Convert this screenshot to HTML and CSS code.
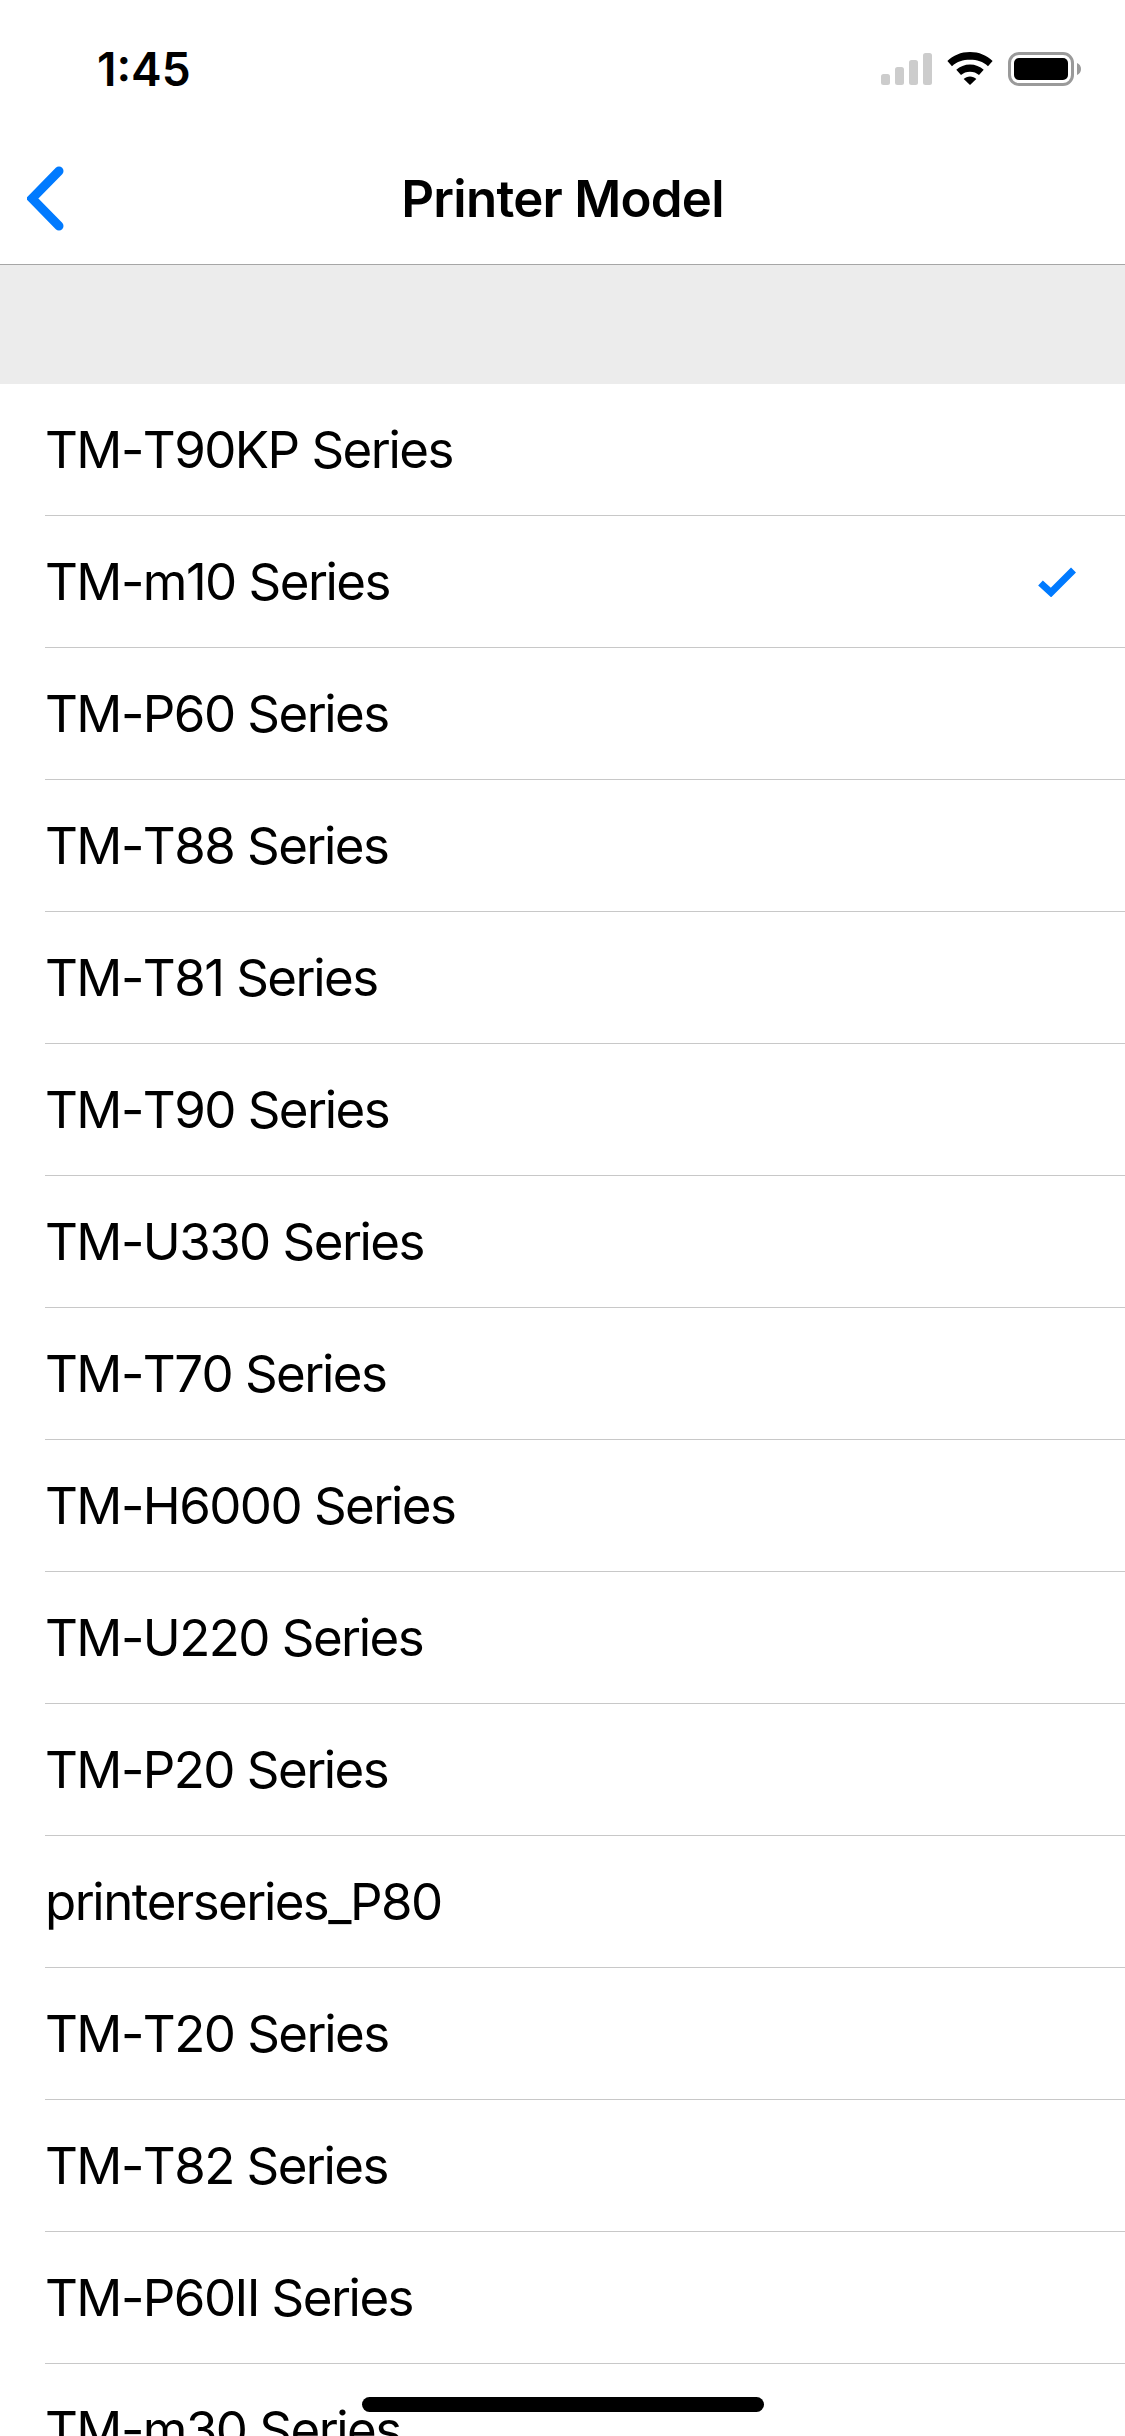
FILE: index.html
```html
<!DOCTYPE html>
<html>
  <head>
    <meta charset="UTF-8">
    <meta name="viewport" content="width=device-width, initial-scale=1">
    <title>Printer Model</title>
    <link rel="stylesheet" href="styles.css">
  </head>
  <body>
    <div class="screen">
      <div class="status-bar">
        <span class="status-time">1:45</span>
        <div class="status-icons">
          <svg class="icon-signal" width="51" height="32" viewBox="0 0 51 32">
            <rect x="0" y="21" width="9" height="11" rx="2.5"/>
            <rect x="14" y="14" width="9" height="18" rx="2.5"/>
            <rect x="28" y="7" width="9" height="25" rx="2.5"/>
            <rect x="42" y="0" width="9" height="32" rx="2.5"/>
          </svg>
          <svg class="icon-wifi" width="46" height="33" viewBox="0 0 46 33">
            <path d="M23 0C14 0 6 3.400.4 9L5 14.200C10 9.600 16.100 7.800 23 7.800s13 1.800 18 6.400L45.600 9C40 3.400 32 0 23 0z"/>
            <path d="M23 12.500c-5.200 0-10 2-13.700 5.300l4.700 5.200c2.400-2.100 5.500-3.300 9-3.300s6.600 1.200 9 3.300l4.700-5.200c-3.700-3.300-8.500-5.300-13.700-5.300z"/>
            <path d="M23 24.500c-2.500 0-4.700.9-6.300 2.400L23 33l6.300-6.100c-1.600-1.500-3.800-2.400-6.300-2.400z"/>
          </svg>
          <svg class="icon-battery" width="73" height="34" viewBox="0 0 73 34">
            <rect class="battery-case" x="1.500" y="1.500" width="63" height="31" rx="9.500"/>
            <rect x="6" y="6" width="54" height="22" rx="5"/>
            <path class="battery-nub" d="M69 11c2.500.8 4 3.300 4 6s-1.500 5.200-4 6z"/>
          </svg>
        </div>
      </div>

      <div class="nav-bar">
        <svg class="nav-back" width="38" height="65" viewBox="0 0 38 65">
          <path d="M32 5 5 32.500 32 60"/>
        </svg>
        <span class="nav-title">Printer Model</span>
      </div>

      <div class="section-header"></div>

      <ul class="model-list">
        <li class="model-row"><span>TM-T90KP Series</span></li>
        <li class="model-row">
          <span>TM-m10 Series</span>
          <svg class="row-check" width="38" height="30" viewBox="0 0 38 30">
            <path d="M2.500 16 13 25.500 35.500 3"/>
          </svg>
        </li>
        <li class="model-row"><span>TM-P60 Series</span></li>
        <li class="model-row"><span>TM-T88 Series</span></li>
        <li class="model-row"><span>TM-T81 Series</span></li>
        <li class="model-row"><span>TM-T90 Series</span></li>
        <li class="model-row"><span>TM-U330 Series</span></li>
        <li class="model-row"><span>TM-T70 Series</span></li>
        <li class="model-row"><span>TM-H6000 Series</span></li>
        <li class="model-row"><span>TM-U220 Series</span></li>
        <li class="model-row"><span>TM-P20 Series</span></li>
        <li class="model-row"><span>printerseries_P80</span></li>
        <li class="model-row"><span>TM-T20 Series</span></li>
        <li class="model-row"><span>TM-T82 Series</span></li>
        <li class="model-row"><span>TM-P60II Series</span></li>
        <li class="model-row"><span>TM-m30 Series</span></li>
      </ul>

      <div class="home-indicator"></div>
    </div>
  </body>
</html>
```

FILE: styles.css
```css
* {
  box-sizing: border-box;
}
html, body {
  margin: 0;
  padding: 0;
  background: #fff;
}
.screen {
  position: relative;
  width: 1125px;
  height: 2436px;
  overflow: hidden;
  font-family: Inter, "Liberation Sans", sans-serif;
  color: #000;
}

.status-bar {
  height: 132px;
  display: flex;
  align-items: flex-start;
  justify-content: space-between;
  padding: 52px 44px 0 97px;
}
.status-time {
  font-size: 46px;
  font-weight: 600;
  line-height: 34px;
}
.status-icons {
  display: flex;
  align-items: flex-start;
}
.icon-signal {
  margin: 1px 15px 0 0;
  fill: #ccc;
}
.icon-wifi {
  margin-right: 15px;
  fill: #000;
}
.battery-case {
  fill: none;
  stroke: #9a9a9a;
  stroke-width: 3;
}
.battery-nub {
  fill: #9a9a9a;
}

.nav-bar {
  position: relative;
  height: 133px;
  display: flex;
  align-items: center;
  justify-content: center;
  border-bottom: 1px solid #a6a6a6;
}
.nav-back {
  position: absolute;
  left: 27px;
  top: 34px;
  fill: none;
  stroke: #007aff;
  stroke-width: 9;
  stroke-linecap: round;
  stroke-linejoin: miter;
}
.nav-title {
  font-size: 51px;
  font-weight: 600;
  letter-spacing: -0.75px;
}

.section-header {
  height: 119px;
  background: #ececec;
}

.model-list {
  list-style: none;
  margin: 0;
  padding: 0;
}
.model-row {
  position: relative;
  height: 132px;
  margin-left: 45px;
  padding-right: 49px;
  display: flex;
  align-items: center;
  justify-content: space-between;
  border-bottom: 1px solid #c8c8c8;
  font-size: 51px;
  font-kerning: none;
  letter-spacing: -1.55px;
}
.row-check {
  fill: none;
  stroke: #007aff;
  stroke-width: 7;
  stroke-linejoin: miter;
}

.home-indicator {
  position: absolute;
  left: 362px;
  top: 2397px;
  width: 402px;
  height: 15px;
  border-radius: 8px;
  background: #000;
}
```
